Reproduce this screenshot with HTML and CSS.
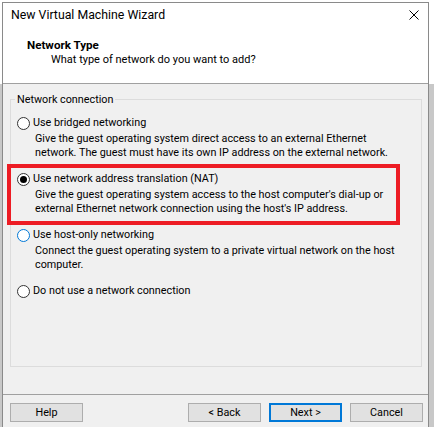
FILE: index.html
```html
<!DOCTYPE html>
<html>
<head>
<meta charset="utf-8">
<link rel="stylesheet" href="styles.css">
</head>
<body>
<div class="window">
  <div class="titlebar">
    <span class="title">New Virtual Machine Wizard</span>
    <svg class="close" viewBox="0 0 10 10" width="10" height="10"><path d="M0.5 0.5 L9.5 9.5 M9.5 0.5 L0.5 9.5" stroke="#000" stroke-width="1" fill="none"/></svg>
  </div>
  <div class="header">
    <div class="h-title">Network Type</div>
    <div class="h-sub">What type of network do you want to add?</div>
  </div>
  <div class="content">
    <fieldset class="group">
      <legend>Network connection</legend>
      <div class="option">
        <div class="row"><span class="radio"></span><span>Use bridged networking</span></div>
        <div class="desc">Give the guest operating system direct access to an external Ethernet<br>network. The guest must have its own IP address on the external network.</div>
      </div>
      <div class="option highlight">
        <div class="row"><span class="radio checked"></span><span>Use network address translation (NAT)</span></div>
        <div class="desc">Give the guest operating system access to the host computer's dial-up or<br>external Ethernet network connection using the host's IP address.</div>
      </div>
      <div class="option">
        <div class="row"><span class="radio focus"></span><span>Use host-only networking</span></div>
        <div class="desc">Connect the guest operating system to a private virtual network on the host<br>computer.</div>
      </div>
      <div class="option">
        <div class="row"><span class="radio"></span><span>Do not use a network connection</span></div>
      </div>
    </fieldset>
  </div>
  <div class="footer">
    <button class="btn help">Help</button>
    <button class="btn">&lt; Back</button>
    <button class="btn default">Next &gt;</button>
    <button class="btn">Cancel</button>
  </div>
</div>
</body>
</html>
```
FILE: styles.css
```css
html, body {
  margin: 0;
}
body {
  padding: 2px 0 0 2px;
  height: 427px;
  box-sizing: border-box;
  overflow: hidden;
  background: linear-gradient(#ffffff 0 84px, #c8c8c8 84px);
  font-family: Roboto, "Liberation Sans", sans-serif;
  font-size: 10.8px;
  color: #000;
}
.window {
  width: 427px;
  height: 440px;
  box-sizing: border-box;
  border: 1px solid #8a8a8a;
  border-bottom: 0;
  background: #f0f0f0;
}
.titlebar {
  height: 26px;
  box-sizing: border-box;
  background: #fff;
  display: flex;
  justify-content: space-between;
  align-items: flex-start;
  padding: 5px 9px 0 8px;
}
.title {
  font-size: 12.3px;
  line-height: 15px;
}
.close {
  margin-top: 2px;
}
.header {
  height: 55px;
  box-sizing: border-box;
  background: #fff;
  border-bottom: 1px solid #a0a0a0;
  padding: 9px 0 0 24px;
}
.h-title {
  font-weight: bold;
  font-size: 11.6px;
  line-height: 14px;
}
.h-sub {
  padding-left: 24px;
  margin-top: 1px;
  font-size: 11px;
  line-height: 14px;
}
.content {
  height: 310px;
  box-sizing: border-box;
  padding: 8px 6px 0 7px;
}
.group {
  margin: 0;
  min-width: 0;
  height: 275px;
  box-sizing: border-box;
  border: 1px solid #dcdcdc;
  padding: 5px 0 0 0;
}
.group legend {
  padding: 0 2px;
  margin-left: 4px;
  line-height: 15px;
}
.option {
  margin-right: 25px;
  padding: 4px 0 6px 6px;
}
.option + .option {
  margin-top: 3px;
}
.highlight {
  outline: 4px solid #ed1c24;
}
.row {
  display: flex;
  align-items: center;
  height: 14px;
  line-height: 14px;
}
.radio {
  flex: none;
  width: 13px;
  height: 13px;
  box-sizing: border-box;
  border: 1px solid #333;
  border-radius: 50%;
  background: #fff;
  margin-right: 3px;
  display: flex;
  align-items: center;
  justify-content: center;
}
.radio.checked::after {
  content: "";
  width: 7px;
  height: 7px;
  border-radius: 50%;
  background: #000;
}
.radio.focus {
  border-color: #0078d7;
}
.desc {
  margin-top: 2px;
  padding-left: 18px;
  line-height: 13.5px;
  white-space: nowrap;
}
.footer {
  border-top: 1px solid #a0a0a0;
  padding: 8px 5px 0 7px;
  display: flex;
  gap: 8px;
}
.btn {
  width: 73px;
  height: 19px;
  box-sizing: border-box;
  border: 1px solid #adadad;
  background: #e1e1e1;
  padding: 0;
  margin: 0;
  font: inherit;
  color: #000;
  display: flex;
  align-items: center;
  justify-content: center;
}
.help {
  margin-right: auto;
}
.btn.default {
  border: 2px solid #0078d7;
}
```
